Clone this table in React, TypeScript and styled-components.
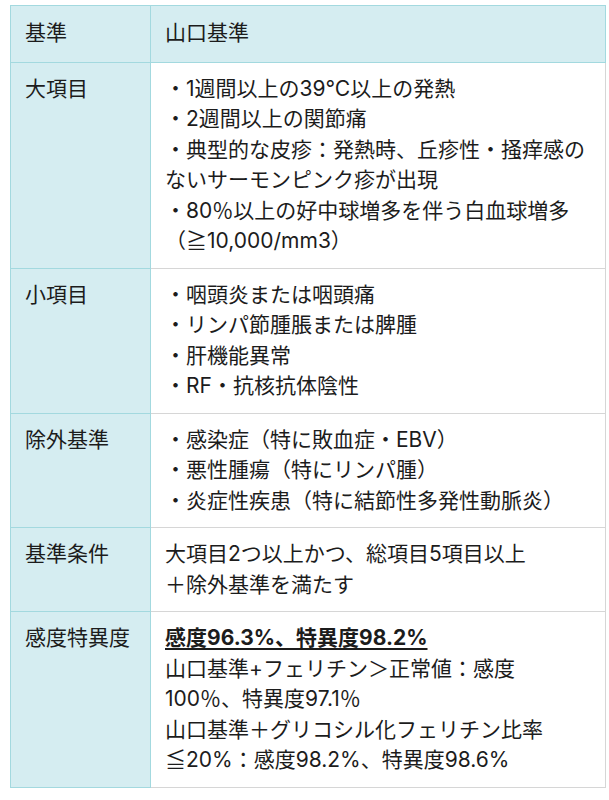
import React from "react";
import styled, { createGlobalStyle } from "styled-components";

const Global = createGlobalStyle`
  html, body { margin: 0; padding: 0; background: #ffffff; }
  body {
    font-family: "Inter", "Noto Sans CJK JP", sans-serif;
    color: #1c1c1c;
  }
`;

const Page = styled.div`
  padding: 5px 3px 0 10px;
`;

const Table = styled.table`
  width: 596px;
  border-collapse: collapse;
  table-layout: fixed;
  font-size: 21px;
  line-height: 30.5px;
`;

const HeadCell = styled.th`
  background: #d5edf1;
  border: 1px solid #a3d9df;
  padding: 12px 14px 13px;
  text-align: left;
  font-weight: 400;
  vertical-align: top;
`;

const LabelCell = styled.td`
  background: #d5edf1;
  border: 1px solid #a3d9df;
  padding: 11px 14px;
  vertical-align: top;
  white-space: nowrap;
`;

const BodyCell = styled.td`
  border: 1px solid #d6d6d6;
  padding: 11px 14px;
  vertical-align: top;
  background: #ffffff;
`;

const Line = styled.div`
  white-space: nowrap;
`;

const Strong = styled.div`
  font-weight: 700;
  text-decoration: underline;
  text-underline-offset: 3px;
  white-space: nowrap;
`;

const rows: { label: string; lines: string[]; strong?: string }[] = [
  {
    label: "大項目",
    lines: [
      "・1週間以上の39℃以上の発熱",
      "・2週間以上の関節痛",
      "・典型的な皮疹：発熱時、丘疹性・掻痒感の",
      "ないサーモンピンク疹が出現",
      "・80％以上の好中球増多を伴う白血球増多",
      "（≧10,000/mm3）",
    ],
  },
  {
    label: "小項目",
    lines: ["・咽頭炎または咽頭痛", "・リンパ節腫脹または脾腫", "・肝機能異常", "・RF・抗核抗体陰性"],
  },
  {
    label: "除外基準",
    lines: ["・感染症（特に敗血症・EBV）", "・悪性腫瘍（特にリンパ腫）", "・炎症性疾患（特に結節性多発性動脈炎）"],
  },
  {
    label: "基準条件",
    lines: ["大項目2つ以上かつ、総項目5項目以上", "＋除外基準を満たす"],
  },
  {
    label: "感度特異度",
    strong: "感度96.3%、特異度98.2%",
    lines: [
      "山口基準+フェリチン＞正常値：感度",
      "100％、特異度97.1％",
      "山口基準＋グリコシル化フェリチン比率",
      "≦20%：感度98.2%、特異度98.6%",
    ],
  },
];

export default function App() {
  return (
    <Page>
      <Global />
      <Table>
        <colgroup>
          <col style={{ width: 140 }} />
          <col />
        </colgroup>
        <thead>
          <tr>
            <HeadCell>基準</HeadCell>
            <HeadCell>山口基準</HeadCell>
          </tr>
        </thead>
        <tbody>
          {rows.map((r) => (
            <tr key={r.label}>
              <LabelCell>{r.label}</LabelCell>
              <BodyCell>
                {r.strong && <Strong>{r.strong}</Strong>}
                {r.lines.map((l) => (
                  <Line key={l}>{l}</Line>
                ))}
              </BodyCell>
            </tr>
          ))}
        </tbody>
      </Table>
    </Page>
  );
}
